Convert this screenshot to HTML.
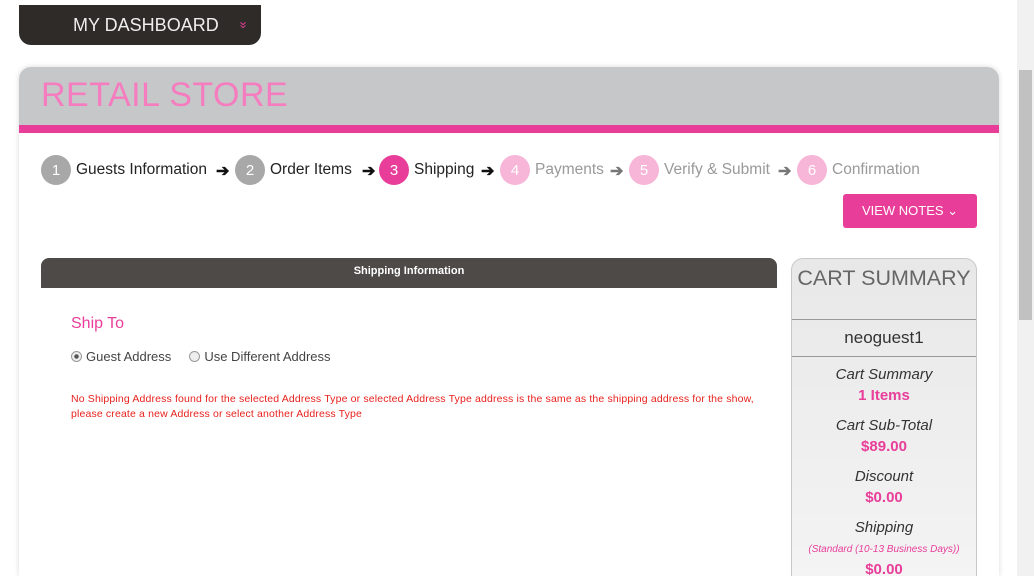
<!DOCTYPE html>
<html><head><style>
*{box-sizing:border-box;margin:0;padding:0}
html,body{width:1034px;height:576px;overflow:hidden}
body{background:#fff;font-family:"Liberation Sans",sans-serif;position:relative}
.sb{position:absolute;right:0;top:0;width:17px;height:576px;background:#f1f1f1}
.sb .th{position:absolute;left:2px;top:70px;width:13px;height:250px;background:#c1c1c1}
.dash{position:absolute;left:19px;top:5px;width:242px;height:40px;background:#2f2b29;border-radius:0 0 12px 12px;color:#eee;font-size:18px;line-height:40px;padding-left:54px}
.dash span{position:absolute;right:14px;top:0;color:#e83e9a;font-size:13px;transform:rotate(90deg)}
.main{position:absolute;left:19px;top:67px;width:980px;height:509px;background:#fff;border-radius:12px 12px 0 0;box-shadow:0 0 6px rgba(0,0,0,.15)}
.hdr{height:58px;background:#c6c7c9;border-radius:12px 12px 0 0;color:#f57cbf;font-size:34px;padding:9px 0 0 22px;letter-spacing:.5px}
.pk{height:8px;background:#e83e9a}
.s{position:absolute;top:88px;height:30px;display:flex;align-items:center;font-size:15.5px;color:#222;white-space:nowrap}
.c{width:30px;height:30px;border-radius:50%;color:#fff;display:inline-flex;align-items:center;justify-content:center;margin-right:5px;font-size:15px}
.ar{position:absolute;top:94px;font-weight:bold;font-size:16px;color:#111}
.btn{position:absolute;left:824px;top:127px;width:134px;height:34px;background:#e83e9a;color:#fff;font-size:13px;text-align:center;line-height:34px;border-radius:3px}
.sih{position:absolute;left:22px;top:191px;width:736px;height:30px;background:#4e4a48;border-radius:8px 8px 0 0;color:#fff;font-size:11px;font-weight:bold;text-align:center;line-height:27px}
.ship{position:absolute;left:52px;top:248px;color:#e83e9a;font-size:16px}
.rad{position:absolute;left:52px;top:282px;font-size:13px;color:#444}
.rad i{display:inline-block;width:11px;height:11px;border:1px solid #999;border-radius:50%;vertical-align:-1px;margin-right:4px;background:#eee}
.err{position:absolute;left:52px;top:325px;width:705px;color:#e8221e;font-size:10.5px;line-height:15px;letter-spacing:.15px}
.cart{position:absolute;left:772px;top:191px;width:186px;height:330px;border:1px solid #c8c8c8;border-radius:12px 12px 0 0;background:linear-gradient(#e8e8e8,#f4f4f4);text-align:center}
.ct{height:61px;font-size:21.5px;color:#666;padding-top:7px;border-bottom:1px solid #999;white-space:nowrap}
.nm{height:37px;font-size:17px;color:#333;line-height:35px;border-bottom:1px solid #999}
.l{font-style:italic;color:#333;font-size:15px;margin-top:12px;line-height:18px}
.v{color:#e83e9a;font-weight:bold;font-size:15px;margin-top:3px;line-height:18px}
</style></head><body>
<div class="dash">MY DASHBOARD<span>&raquo;</span></div>
<div class="main">
<div class="hdr">RETAIL STORE</div><div class="pk"></div>
<div class="s" style="left:22px"><span class="c" style="background:#a8a8a8">1</span>Guests Information</div>
<div class="ar" style="left:197px">&#x2794;</div>
<div class="s" style="left:216px"><span class="c" style="background:#a8a8a8">2</span>Order Items</div>
<div class="ar" style="left:343px">&#x2794;</div>
<div class="s" style="left:360px"><span class="c" style="background:#e83e9a">3</span>Shipping</div>
<div class="ar" style="left:462px">&#x2794;</div>
<div class="s" style="left:481px;color:#999"><span class="c" style="background:#f7b5d8">4</span>Payments</div>
<div class="ar" style="left:591px;color:#777">&#x2794;</div>
<div class="s" style="left:610px;color:#999"><span class="c" style="background:#f7b5d8">5</span>Verify &amp; Submit</div>
<div class="ar" style="left:759px;color:#777">&#x2794;</div>
<div class="s" style="left:778px;color:#999"><span class="c" style="background:#f7b5d8">6</span>Confirmation</div>
<div class="btn">VIEW NOTES &#x2304;</div>
<div class="sih">Shipping Information</div>
<div class="ship">Ship To</div>
<div class="rad"><i style="background:radial-gradient(#555 30%,#eee 40%)"></i>Guest Address &nbsp;&nbsp;&nbsp;&nbsp;<i></i>Use Different Address</div>
<div class="err">No Shipping Address found for the selected Address Type or selected Address Type address is the same as the shipping address for the show, please create a new Address or select another Address Type</div>
<div class="cart">
<div class="ct">CART SUMMARY</div>
<div class="nm">neoguest1</div>
<div class="l" style="margin-top:9px">Cart Summary</div><div class="v">1 Items</div>
<div class="l">Cart Sub-Total</div><div class="v">$89.00</div>
<div class="l">Discount</div><div class="v">$0.00</div>
<div class="l">Shipping</div><div style="color:#e83e9a;font-style:italic;font-size:10px;margin-top:6px;line-height:14px">(Standard (10-13 Business Days))</div><div class="v" style="margin-top:4px">$0.00</div>
</div>
</div>
<div class="sb"><div class="th"></div></div>
</body></html>
